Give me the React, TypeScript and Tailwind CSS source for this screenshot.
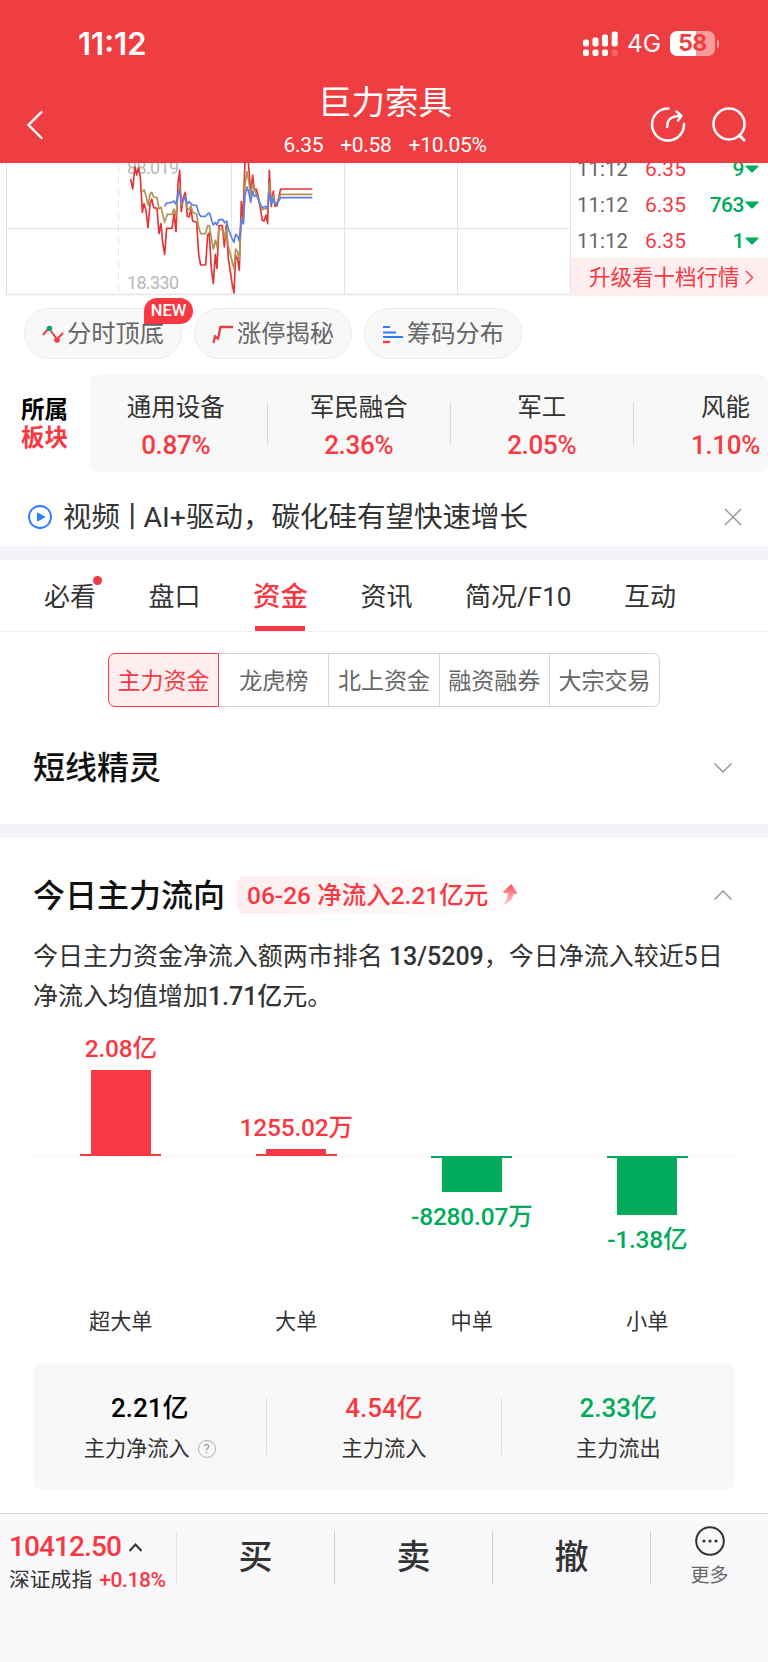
const TRADES = [
  { time: "11:12", price: "6.35", volume: "9" },
  { time: "11:12", price: "6.35", volume: "763" },
  { time: "11:12", price: "6.35", volume: "1" },
];

const SECTORS = [
  { name: "通用设备", change: "0.87%" },
  { name: "军民融合", change: "2.36%" },
  { name: "军工", change: "2.05%" },
  { name: "风能", change: "1.10%" },
];

const SEGMENTS = ["主力资金", "龙虎榜", "北上资金", "融资融券", "大宗交易"];

// height is the bar's length in px, positive grows up from the axis
const FLOWS = [
  { name: "超大单", label: "2.08亿", height: 86 },
  { name: "大单", label: "1255.02万", height: 7 },
  { name: "中单", label: "-8280.07万", height: -36 },
  { name: "小单", label: "-1.38亿", height: -59 },
];

export default function App() {
  return (
    <div className="flex h-[1662px] w-[768px] flex-col overflow-hidden bg-white font-['Roboto','Noto_Sans_CJK_SC',sans-serif] text-[#333]">
      <Header />
      <QuotePanel />
      <Tools />
      <Sectors />
      <NewsBar />
      <div className="h-[14px] shrink-0 bg-[#f3f4f9]" />
      <Tabs />
      <Segments />
      <section className="flex h-[117px] shrink-0 items-center justify-between pl-[33px] pr-[36px] pt-1">
        <h2 className="text-[32px] font-medium leading-none text-[#111]">短线精灵</h2>
        <Chevron />
      </section>
      <div className="h-[14px] shrink-0 bg-[#f3f4f9]" />
      <FlowSection />
      <BottomBar />
    </div>
  );
}

function Header() {
  return (
    <header className="h-[163px] shrink-0 bg-[#ef3e41] text-white">
      <div className="flex h-[86px] items-center pl-[78px] pr-[49px] pt-px font-['Inter',sans-serif]">
        <span className="text-[31px] font-semibold leading-none">11:12</span>
        <svg className="ml-auto" width="36" height="26" viewBox="0 0 36 26" fill="#fff">
          <rect x="0" y="8.5" width="6" height="7" rx="2" />
          <rect x="9.5" y="6.5" width="6" height="9" rx="2" />
          <rect x="19" y="3.5" width="6" height="12" rx="2" />
          <rect x="28.7" y="0.5" width="6" height="15" rx="2" />
          <rect x="0" y="18.5" width="6" height="6.5" rx="2" />
          <rect x="9.5" y="18.5" width="6" height="6.5" rx="2" />
          <rect x="19" y="18.5" width="6" height="6.5" rx="2" />
          <rect x="28.7" y="18.5" width="6" height="6.5" rx="2" opacity="0.2" />
        </svg>
        <span className="ml-[8px] text-[24.5px] leading-none tracking-[-0.1px]">4G</span>
        <div className="ml-[9px] flex h-[25px] w-[45px] items-center justify-center rounded-[7px] bg-[linear-gradient(90deg,#fff_57%,#f79b9d_57%)] text-[23px] font-bold leading-none tracking-[-0.5px] text-[#ef3e41]">
          58
        </div>
        <div className="ml-[1.5px] h-2 w-[2.5px] rounded-r-full bg-[#f79b9d]" />
      </div>
      <div className="flex h-[77px] justify-between pl-[26px] pr-[21px]">
        <svg className="mt-6" width="18" height="30" viewBox="0 0 18 30" fill="none" stroke="#fff" strokeWidth="2.4" strokeLinecap="round">
          <path d="M15.5 2 2.5 15 15.5 28" />
        </svg>
        <div className="ml-[76px] flex flex-col items-center">
          <h1 className="text-[33.5px] leading-[33px]">巨力索具</h1>
          <div className="mt-[13px] flex gap-[17px] text-[21px] leading-[26px] tracking-[-0.3px]">
            <span>6.35</span>
            <span>+0.58</span>
            <span>+10.05%</span>
          </div>
        </div>
        <div className="mt-5 flex h-9 gap-[25px]">
          <svg width="36" height="36" viewBox="0 0 36 36" fill="none" stroke="#fff" strokeWidth="2.5" strokeLinecap="round">
            <path d="M18.500 2.500A16 16 0 1 0 34 18" />
            <path d="M17.200 21C17.200 14 20 10 30 10" />
            <path d="M26.500 5.500 31.500 10 28 14.500" strokeLinejoin="round" />
          </svg>
          <svg width="36" height="36" viewBox="0 0 36 36" fill="none" stroke="#fff" strokeWidth="2.5" strokeLinecap="round">
            <circle cx="18" cy="18" r="15.500" />
            <path d="m28.500 29.500 4.500 4.500" strokeWidth="3" />
          </svg>
        </div>
      </div>
    </header>
  );
}

function QuotePanel() {
  return (
    <section className="flex h-[133px] shrink-0 overflow-hidden">
      <svg width="571" height="133" viewBox="0 0 571 133" fill="none">
        <g stroke="#e4e4e4" strokeWidth="1">
          <path d="M6.500 0V132M231.500 0V132M344.500 0V132M457.500 0V132M570.500 0V132" />
          <path d="M6 65.500H570" />
          <path d="M6 131.500H570" strokeWidth="1.500" />
          <path d="M118.500 2V132" strokeDasharray="7 5" />
        </g>
        <g fill="#b8b8b8" fontSize="18">
          <text x="127" y="10.500" textLength="52">88.019</text>
          <text x="127" y="125.500" textLength="52">18.330</text>
        </g>
        <g transform="translate(100 -8) scale(0.3333)" strokeWidth="5" strokeLinejoin="round">
          <path
            stroke="#e53434"
            d="M92 72 98 102 105 36 110 60 115 38 121 66 127 172 132 146 138 166 144 218 150 146 155 132 161 158 171 160 177 236 183 206 188 262 194 298 200 220H216L222 176 228 230 234 84 239 46 244 170 250 128 256 112 262 184 267 186 273 164 278 198 290 202 296 298 302 330H317L323 240 328 234 334 340 340 386 346 298 351 340 357 212H367L373 276 379 210 385 310 396 384 402 414 407 300 413 314 418 346 424 140 429 190 435 20H445L452 112 458 60 463 104 469 102 475 126 481 160 487 196 492 198 498 180 503 206 508 46 514 154 520 108 525 154 531 152 542 102H637"
          />
          <path
            stroke="#b39257"
            d="M127 110 132 104 138 122 144 150 150 118 155 112 161 126 171 128 177 162 183 156 188 178 194 202 202 178H216L222 162 228 184 234 120 239 98 245 150 256 124 262 162 267 164 273 152 278 172 290 178 296 216 302 236H317L323 212 328 212 334 248 340 282 346 256 351 276 357 222 369 224 374 250 379 220 385 274 402 342 407 282 413 290 418 314 424 190 430 206 435 90 441 50 447 84 452 122 458 84 463 104 475 130 481 152 487 164 498 160 503 166 508 84 514 144 520 122 525 148 531 144 542 118H637"
          />
          <path
            stroke="#5f7de8"
            d="M194 154 200 144 216 142 222 138 228 148 234 116 238 106 245 142 256 126 262 146 267 140 273 146 278 150 290 152 296 174 302 184H317L323 176 329 174 335 196 340 210 346 202 351 210 357 194 369 194 374 204 380 198 385 222 396 250 402 262 407 238 413 244 418 258 424 194 430 206 435 122 441 96 447 114 452 142 458 108 463 124 470 122 475 132 481 148 487 158 498 154 503 160 508 112 514 146 520 130 525 148 531 146 542 128H637"
          />
        </g>
      </svg>
      <div className="flex flex-1 flex-col">
        <div className="-mt-[13px] mb-0 flex flex-col">
          {TRADES.map((t, i) => (
            <div key={i} className="flex h-9 items-center pl-[6px] pr-[9px] pt-[2px] text-[20.5px] leading-none">
              <span className="w-[68px] text-[#666]">{t.time}</span>
              <span className="text-[21px] text-[#f83842]">{t.price}</span>
              <span className="ml-auto mr-px text-[21px] font-medium tracking-[-0.5px] text-[#00ab5b]">{t.volume}</span>
              <svg width="14" height="8" viewBox="0 0 14 8" fill="#00ab5b">
                <path d="M0.500 1.500Q0 0.500 1 0.500H13Q14 0.500 13.500 1.500L8 7Q7 8 6 7Z" />
              </svg>
            </div>
          ))}
        </div>
        <div className="flex h-[38px] items-center bg-[#feeeef] pl-[18px] text-[#f83842]">
          <span className="pt-px text-[21.5px] leading-none">升级看十档行情</span>
          <svg className="ml-[5px]" width="9" height="15" viewBox="0 0 9 15" fill="none" stroke="currentColor" strokeWidth="1.4">
            <path d="M1 1 7.500 7.500 1 14" />
          </svg>
        </div>
      </div>
    </section>
  );
}

function Tools() {
  return (
    <section className="flex shrink-0 gap-3 pl-[24px] pt-3">
      <Tool label="分时顶底" isNew>
        <path d="M1 11 6 5M9 7 14 14M16 14 21 9" stroke="#f83842" strokeWidth="2" />
        <circle cx="7.500" cy="4.500" r="2.800" fill="#00ab5b" />
        <circle cx="15" cy="16" r="2.800" fill="#f83842" />
      </Tool>
      <Tool label="涨停揭秘">
        <path d="M1.500 19 3 12.500 6 14.500 8.500 3H21" stroke="#e5404a" strokeWidth="2.400" />
      </Tool>
      <Tool label="筹码分布">
        <path d="M1 3H8M1 8.500H14M1 13H21" stroke="#2f7bff" strokeWidth="2" />
        <path d="M1 18H8" stroke="#f83842" strokeWidth="2.400" />
      </Tool>
    </section>
  );
}

function Tool({ label, isNew, children }: { label: string; isNew?: boolean; children: React.ReactNode }) {
  return (
    <div className="relative flex h-[51px] w-[158px] items-center justify-center gap-[3px] rounded-full border border-[#ebebeb] bg-[#f8f8f8] pt-px">
      <svg width="22" height="21" viewBox="0 0 22 21" fill="none">
        {children}
      </svg>
      <span className="text-[24.200px] leading-none text-[#666]">{label}</span>
      {isNew && (
        <span className="absolute -right-[12px] -top-[11px] flex h-[26px] w-[49px] items-center justify-center rounded-[13px] rounded-bl-none bg-[#f83842] pt-px text-[16.500px] font-medium leading-none text-white">
          NEW
        </span>
      )}
    </div>
  );
}

function Sectors() {
  return (
    <section className="mt-4 flex h-[97px] shrink-0">
      <div className="flex w-[90px] flex-col justify-center pl-[21px] text-[23.5px] font-bold leading-[28px]">
        <span className="text-black">所属</span>
        <span className="text-[#f83842]">板块</span>
      </div>
      <div className="flex flex-1 items-center overflow-hidden rounded-lg bg-[#f8f8f8]">
        <div className="-ml-[5px] flex shrink-0">
          {SECTORS.map((s, i) => (
            <div key={s.name} className="flex w-[183px] shrink-0 items-center">
              <div className="flex flex-1 flex-col items-center gap-[10px] pt-[4px]">
                <span className="text-[24.500px] leading-[28px]">{s.name}</span>
                <span className="text-[26px] font-medium leading-[26px] tracking-[-0.3px] text-[#f83842]">{s.change}</span>
              </div>
              {i < SECTORS.length - 1 && <span className="h-[43px] w-[1.5px] bg-[#d9d9d9]" />}
            </div>
          ))}
        </div>
      </div>
    </section>
  );
}

function NewsBar() {
  return (
    <section className="flex h-[74px] shrink-0 items-center pl-7 pr-[26px] pt-[16px]">
      <svg width="24" height="24" viewBox="0 0 24 24" fill="none">
        <circle cx="12" cy="12" r="11" stroke="#2f7bff" strokeWidth="1.800" />
        <path d="M9.500 8 17 12 9.500 16Z" fill="#2f7bff" stroke="#2f7bff" strokeLinejoin="round" />
      </svg>
      <p className="ml-[11px] pt-[3px] text-[28.5px] leading-none">
        视频<span className="-ml-[2px] -mr-[3px]">丨</span>AI+驱动，碳化硅有望快速增长
      </p>
      <svg className="ml-auto" width="18" height="18" viewBox="0 0 18 18" stroke="#999" strokeWidth="1.500">
        <path d="M1 1 17 17M17 1 1 17" />
      </svg>
    </section>
  );
}

function Tabs() {
  return (
    <nav className="flex h-[72px] shrink-0 items-start gap-[52.500px] border-b border-[#f0f0f0] pl-[44px] text-[26px] leading-[74px]">
      <span className="relative">
        必看
        <i className="absolute -right-[6px] top-4 size-[9px] rounded-full bg-[#f83842]" />
      </span>
      <span>盘口</span>
      <span className="relative text-[27.5px] font-medium text-[#f83842]">
        资金
        <i className="absolute left-[2px] top-[66px] h-[5px] w-[50px] bg-[#f83842]" />
      </span>
      <span>资讯</span>
      <span>简况/F10</span>
      <span>互动</span>
    </nav>
  );
}

function Segments() {
  return (
    <div className="mx-[108px] mt-[21px] flex h-[54px] shrink-0 text-[23px] leading-none text-[#666]">
      {SEGMENTS.map((s, i) => (
        <button
          key={s}
          className={
            i === 0
              ? "flex-1 rounded-l-[7px] border border-[#f83842] bg-[#feeeef] pt-[2px] text-[#f83842]"
              : "flex-1 border border-l-0 border-[#d4d4d4] pt-[2px] last:rounded-r-[7px]"
          }
        >
          {s}
        </button>
      ))}
    </div>
  );
}

function Chevron({ up }: { up?: boolean }) {
  return (
    <svg width="18" height="10" viewBox="0 0 18 10" fill="none" stroke="#999" strokeWidth="1.500">
      <path d={up ? "M0.500 9.500 9 1 17.500 9.500" : "M0.500 0.500 9 9 17.500 0.500"} />
    </svg>
  );
}

function FlowSection() {
  return (
    <section className="flex h-[675px] shrink-0 flex-col px-[33px]">
      <div className="mt-[38px] flex h-[38px] items-center">
        <h2 className="pt-px text-[32px] font-medium leading-none text-[#111]">今日主力流向</h2>
        <div className="ml-[12px] flex h-[38px] w-[290px] items-center rounded-lg bg-[linear-gradient(90deg,#feeeef,#fff)] pl-[10px] text-[#f83842]">
          <span className="pt-[2px] text-[24.5px] font-medium leading-none">06-26 净流入2.21亿元</span>
          <svg className="ml-[13px]" width="17" height="22" viewBox="0 0 17 22">
            <defs>
              <linearGradient id="rise" x1="0" y1="0" x2="0" y2="1">
                <stop offset="0" stopColor="#f8575f" />
                <stop offset="1" stopColor="#fccdd0" />
              </linearGradient>
            </defs>
            <path fill="url(#rise)" d="M9.500 0.500Q10.500 0 11 1L16 8.500Q16.500 10 15 10H12.500Q12 17 1.500 21.500Q7 15 7 9.500L3 9Q1.500 8.500 2.500 7.500Z" />
          </svg>
        </div>
        <div className="ml-auto mr-[3px]">
          <Chevron up />
        </div>
      </div>
      <p className="mt-[23px] whitespace-nowrap text-[25px] leading-[40px] tracking-[-0.02px]">
        今日主力资金净流入额两市排名 <b className="font-medium">13/5209</b>，今日净流入较近5日
        <br />
        净流入均值增加<b className="font-medium">1.71亿</b>元。
      </p>
      <FlowChart />
      <div className="mt-auto mb-6 flex h-[125px] items-center rounded-lg bg-[#f8f8f8]">
        <Total value="2.21亿" label="主力净流入" color="text-black" hint />
        <span className="h-[57px] w-px bg-[#ddd]" />
        <Total value="4.54亿" label="主力流入" color="text-[#f83842]" />
        <span className="h-[57px] w-px bg-[#ddd]" />
        <Total value="2.33亿" label="主力流出" color="text-[#00ab5b]" />
      </div>
    </section>
  );
}

function FlowChart() {
  return (
    <div className="mt-px flex">
      {FLOWS.map((f) => {
        const up = f.height > 0;
        return (
          <div key={f.name} className={up ? "flex flex-1 flex-col items-center text-[#f83842]" : "flex flex-1 flex-col items-center text-[#00ab5b]"}>
            <div className="flex h-[139px] w-full flex-col items-center justify-end border-b border-[#f4f4f4]">
              {up && (
                <>
                  <span className="mb-[8px] text-[24.5px] font-medium leading-[26px] tracking-[-0.2px]">{f.label}</span>
                  <div className="w-[60px] bg-current" style={{ height: f.height - 2 }} />
                  <div className="h-[2px] w-[81px] bg-current" />
                </>
              )}
            </div>
            <div className="-mt-px flex h-[153px] flex-col items-center">
              {!up && (
                <>
                  <div className="h-[2px] w-[81px] bg-current" />
                  <div className="w-[60px] bg-current" style={{ height: -f.height - 2 }} />
                  <span className="mt-[12px] text-[24.5px] font-medium leading-[26px] tracking-[-0.2px]">{f.label}</span>
                </>
              )}
            </div>
            <span className="text-[21.200px] leading-[26px] text-[#333]">{f.name}</span>
          </div>
        );
      })}
    </div>
  );
}

function Total({ value, label, color, hint }: { value: string; label: string; color: string; hint?: boolean }) {
  return (
    <div className="flex flex-1 flex-col items-center pt-[2px]">
      <span className={`text-[26px] font-medium leading-[28px] ${color}`}>{value}</span>
      <span className="mt-[14px] flex items-center text-[21.200px] leading-[26px]">
        {label}
        {hint && (
          <i className="ml-2 flex size-[18px] items-center justify-center rounded-full border-[1.5px] border-[#b0b0b0] text-[13px] not-italic leading-none text-[#999]">
            ?
          </i>
        )}
      </span>
    </div>
  );
}

function BottomBar() {
  return (
    <footer className="flex h-[149px] shrink-0 items-start border-t border-[#dcdcdf] bg-[#f9f9fc] pt-[17px]">
      <div className="flex h-[53px] w-[177px] flex-col border-r border-[#e2e2e4] pl-[9px]">
        <div className="flex items-center">
          <span className="text-[28px] font-medium leading-[32px] tracking-[-0.9px] text-[#f83842]">10412.50</span>
          <svg className="ml-2" width="13" height="9" viewBox="0 0 13 9" fill="none" stroke="#333" strokeWidth="2">
            <path d="M0.500 8 6.500 1.500 12.500 8" />
          </svg>
        </div>
        <div className="mt-[4px] flex items-center gap-[7px] whitespace-nowrap leading-[26px]">
          <span className="text-[20.800px]">深证成指</span>
          <span className="text-[21px] font-medium tracking-[-0.4px] text-[#f83842]">+0.18%</span>
        </div>
      </div>
      {["买", "卖", "撤"].map((a) => (
        <div key={a} className="flex h-[53px] w-[158px] items-center justify-center border-r border-[#cfcfd2] pb-px text-[34px] font-medium leading-none">
          {a}
        </div>
      ))}
      <div className="-mt-[5px] flex flex-1 flex-col items-center">
        <svg width="30" height="30" viewBox="0 0 30 30">
          <circle cx="15" cy="15" r="13.800" fill="none" stroke="#333" strokeWidth="2" />
          <circle cx="9" cy="15" r="1.600" fill="#333" />
          <circle cx="15" cy="15" r="1.600" fill="#333" />
          <circle cx="21" cy="15" r="1.600" fill="#333" />
        </svg>
        <span className="mt-[8px] text-[19px] leading-[24px] text-[#666]">更多</span>
      </div>
    </footer>
  );
}
